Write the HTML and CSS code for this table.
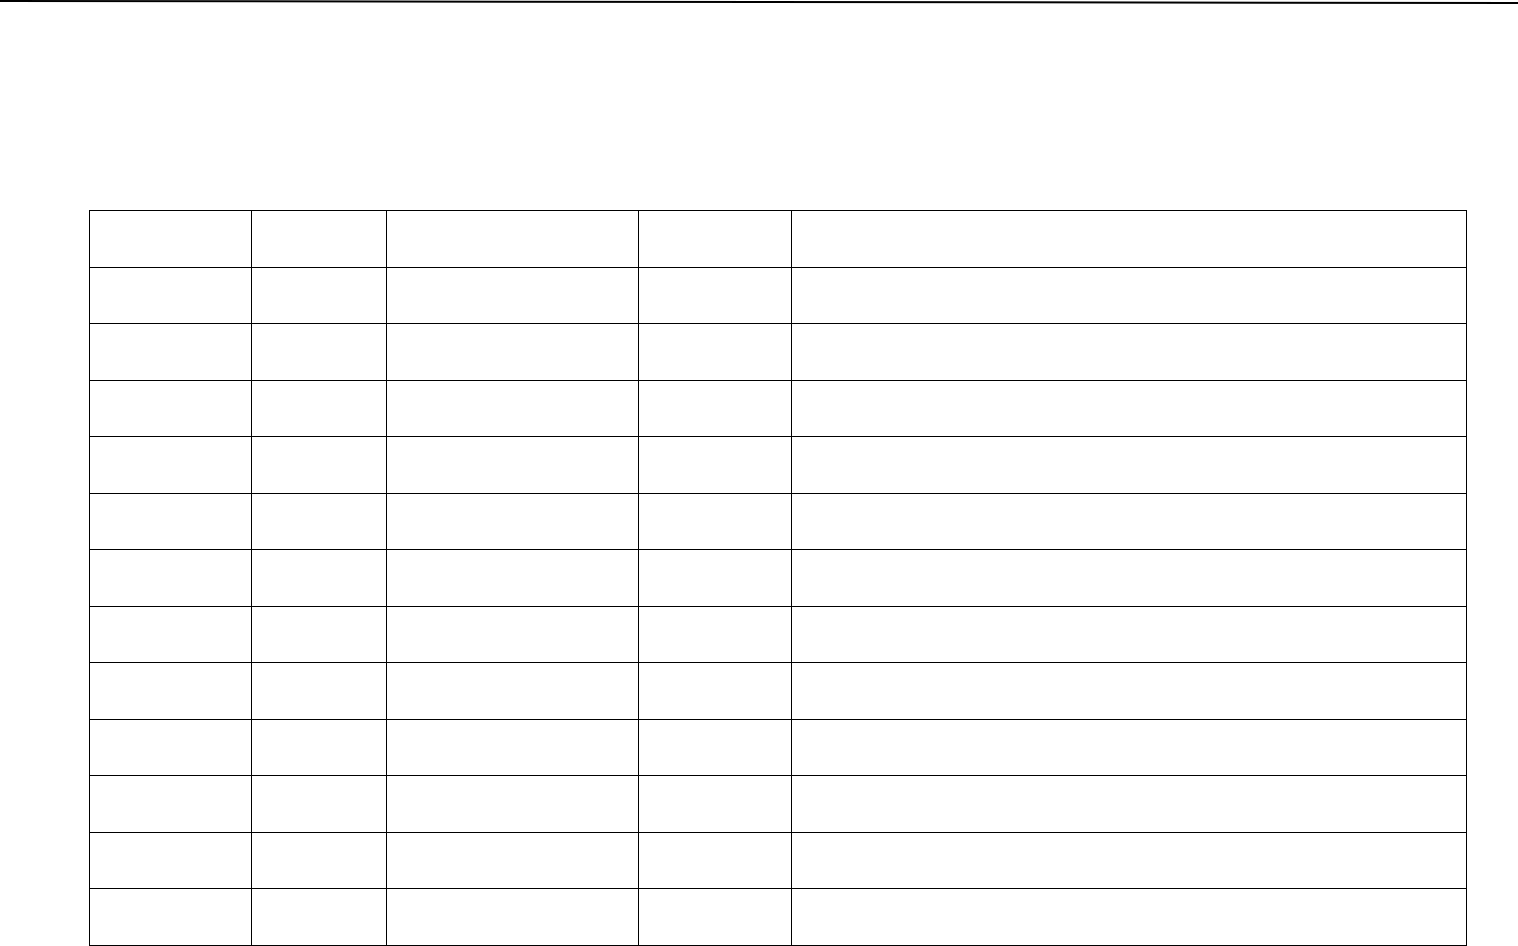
FILE: index.html
```html
<!DOCTYPE html>
<html lang="en">
<head>
<meta charset="utf-8">
<title>Table</title>
<link rel="stylesheet" href="styles.css">
</head>
<body>
<svg class="rule" width="1518" height="4" viewBox="0 0 1518 4" preserveAspectRatio="none" aria-hidden="true">
  <line x1="0" y1="1" x2="1518" y2="3" stroke="#000" stroke-width="2"/>
</svg>
<main class="page">
  <table class="grid">
    <colgroup>
      <col class="c1"><col class="c2"><col class="c3"><col class="c4"><col class="c5">
    </colgroup>
    <tbody>
      <tr><td></td><td></td><td></td><td></td><td></td></tr>
      <tr><td></td><td></td><td></td><td></td><td></td></tr>
      <tr><td></td><td></td><td></td><td></td><td></td></tr>
      <tr><td></td><td></td><td></td><td></td><td></td></tr>
      <tr><td></td><td></td><td></td><td></td><td></td></tr>
      <tr><td></td><td></td><td></td><td></td><td></td></tr>
      <tr><td></td><td></td><td></td><td></td><td></td></tr>
      <tr><td></td><td></td><td></td><td></td><td></td></tr>
      <tr><td></td><td></td><td></td><td></td><td></td></tr>
      <tr><td></td><td></td><td></td><td></td><td></td></tr>
      <tr><td></td><td></td><td></td><td></td><td></td></tr>
      <tr><td></td><td></td><td></td><td></td><td></td></tr>
      <tr><td></td><td></td><td></td><td></td><td></td></tr>
    </tbody>
  </table>
</main>
</body>
</html>
```
FILE: styles.css
```css
html, body {
  margin: 0;
  padding: 0;
  background: #fff;
  font-family: "Liberation Serif", "Times New Roman", serif;
}
.rule {
  display: block;
  width: 1518px;
  height: 4px;
}
.page {
  padding: 206px 0 0 89px;
}
.grid {
  border-collapse: collapse;
  table-layout: fixed;
  width: 1378px;
}
.grid td {
  border: 1px solid #000;
  height: 55.5px;
  padding: 0;
}
.c1 { width: 162px; }
.c2 { width: 135px; }
.c3 { width: 252px; }
.c4 { width: 153px; }
.c5 { width: 675px; }
```
